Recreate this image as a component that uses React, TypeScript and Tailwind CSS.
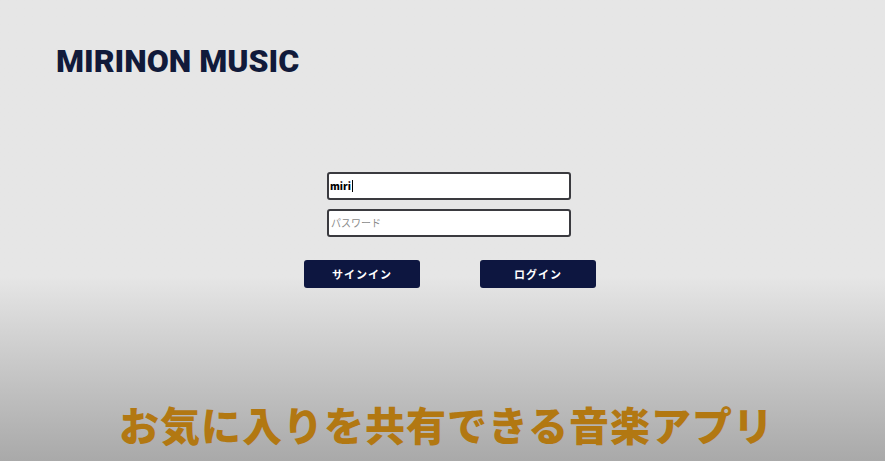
export default function App() {
  return (
    <div className="h-[461px] w-full overflow-hidden bg-linear-to-b from-[#e6e6e6] from-[60%] to-[#a9a9a9] flex flex-col font-['Noto_Sans_CJK_JP',sans-serif]">
      <header className="pt-[41px] pl-[56px]">
        <h1 className="font-['Roboto','Noto_Sans_CJK_JP',sans-serif] font-black text-[32px] leading-[40px] tracking-[0px] text-[#111a3a]">
          MIRINON MUSIC
        </h1>
      </header>

      <main className="mt-[91px] flex flex-col items-center pl-[15px]">
        <div className="flex flex-col gap-[9px] mr-[2px]">
          <div className="w-[244px] h-[28px] bg-white border-2 border-[#3a3a3f] rounded-[3px] flex items-center px-[1px]">
            <span className="text-[10px] font-black text-black leading-none">miri</span>
            <span className="w-px h-[12px] bg-black ml-px" />
          </div>
          <div className="w-[244px] h-[28px] bg-white border-2 border-[#3a3a3f] rounded-[3px] flex items-center px-[2px]">
            <span className="text-[10px] text-[#8a8a8a] leading-none">パスワード</span>
          </div>
        </div>
        <div className="mt-[23px] flex gap-[60px]">
          <button className="w-[116px] h-[28px] bg-[#0d1640] rounded-[3px] text-white text-[11px] font-bold tracking-[1px]">
            サインイン
          </button>
          <button className="w-[116px] h-[28px] bg-[#0d1640] rounded-[3px] text-white text-[11px] font-bold tracking-[1px]">
            ログイン
          </button>
        </div>
      </main>

      <footer className="mt-auto mb-[12px] flex justify-center pl-[8px]">
        <p className="text-[40px] leading-[50px] font-black text-[#b27812] tracking-[1px]">
          お気に入りを共有できる音楽アプリ
        </p>
      </footer>
    </div>
  );
}
